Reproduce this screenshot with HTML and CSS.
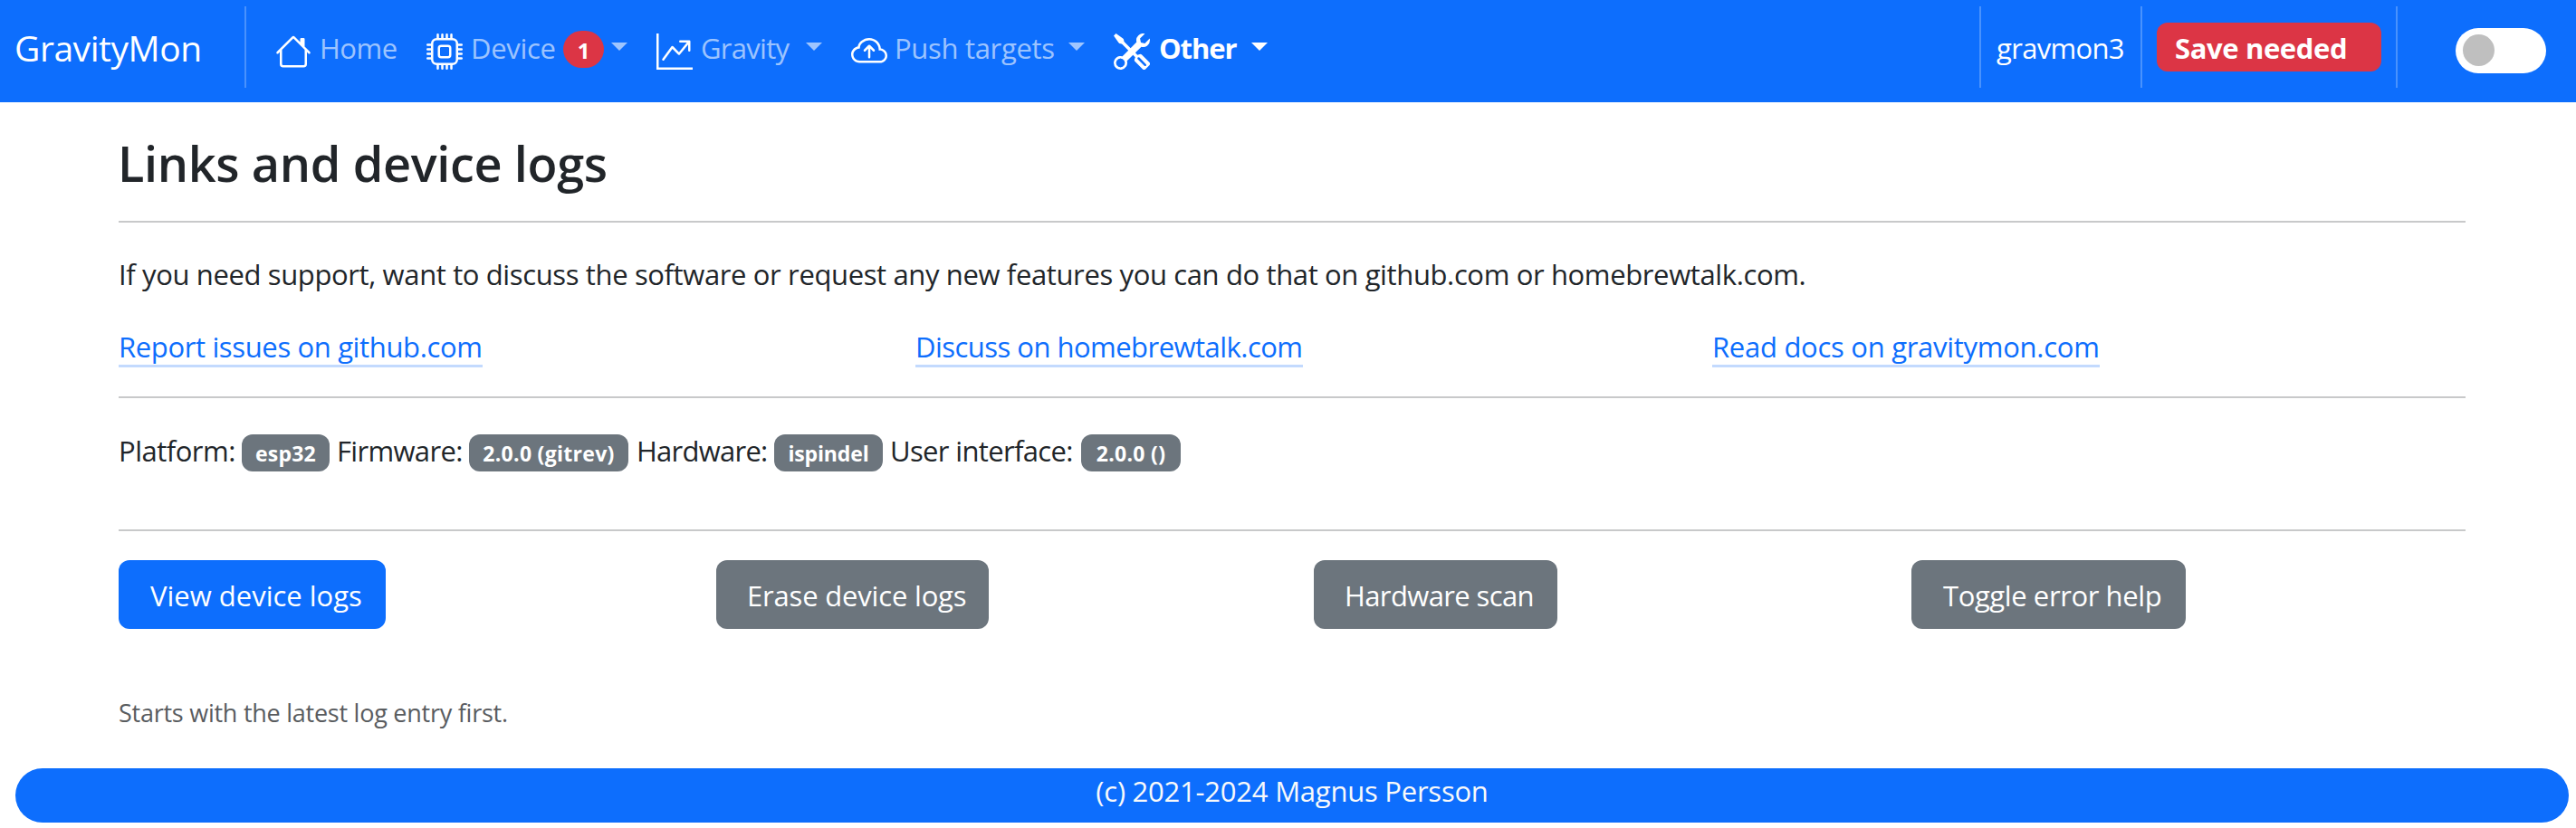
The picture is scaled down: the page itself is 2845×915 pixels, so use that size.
FILE: index.html
```html
<!DOCTYPE html>
<html lang="en">
<head>
<meta charset="utf-8">
<title>GravityMon</title>
<link rel="stylesheet" href="styles.css">
</head>
<body>
<nav class="navbar">
  <a class="brand">GravityMon</a>
  <div class="divider"></div>
  <ul class="menu">
    <li class="item home">
      <svg class="icon" viewBox="0 0 16 16"><path d="M8.707 1.5a1 1 0 0 0-1.414 0L.646 8.146a.5.5 0 0 0 .708.708L2 8.207V13.5A1.5 1.5 0 0 0 3.5 15h9a1.5 1.5 0 0 0 1.5-1.5V8.207l.646.647a.5.5 0 0 0 .708-.708L13 5.793V2.5a.5.5 0 0 0-.5-.5h-1a.5.5 0 0 0-.5.5v1.293L8.707 1.5ZM13 7.207V13.5a.5.5 0 0 1-.5.5h-9a.5.5 0 0 1-.5-.5V7.207l5-5 5 5Z"/></svg>
      <span class="label">Home</span>
    </li>
    <li class="item device">
      <svg class="icon" viewBox="0 0 16 16"><path d="M5 0a.5.5 0 0 1 .5.5V2h1V.5a.5.5 0 0 1 1 0V2h1V.5a.5.5 0 0 1 1 0V2h1V.5a.5.5 0 0 1 1 0V2A2.5 2.5 0 0 1 14 4.5h1.5a.5.5 0 0 1 0 1H14v1h1.5a.5.5 0 0 1 0 1H14v1h1.5a.5.5 0 0 1 0 1H14v1h1.5a.5.5 0 0 1 0 1H14a2.5 2.5 0 0 1-2.5 2.5v1.5a.5.5 0 0 1-1 0V14h-1v1.5a.5.5 0 0 1-1 0V14h-1v1.5a.5.5 0 0 1-1 0V14h-1v1.5a.5.5 0 0 1-1 0V14A2.5 2.5 0 0 1 2 11.5H.5a.5.5 0 0 1 0-1H2v-1H.5a.5.5 0 0 1 0-1H2v-1H.5a.5.5 0 0 1 0-1H2v-1H.5a.5.5 0 0 1 0-1H2A2.5 2.5 0 0 1 4.5 2V.5A.5.5 0 0 1 5 0zm-.5 3A1.5 1.5 0 0 0 3 4.5v7A1.5 1.5 0 0 0 4.5 13h7a1.5 1.5 0 0 0 1.5-1.5v-7A1.5 1.5 0 0 0 11.5 3h-7zM5 6.5A1.5 1.5 0 0 1 6.5 5h3A1.5 1.5 0 0 1 11 6.5v3A1.5 1.5 0 0 1 9.5 11h-3A1.5 1.5 0 0 1 5 9.5v-3zM6.5 6a.5.5 0 0 0-.5.5v3a.5.5 0 0 0 .5.5h3a.5.5 0 0 0 .5-.5v-3a.5.5 0 0 0-.5-.5h-3z"/></svg>
      <span class="label">Device</span>
      <span class="count">1</span>
      <span class="caret"></span>
    </li>
    <li class="item gravity">
      <svg class="icon" viewBox="0 0 16 16"><path fill-rule="evenodd" d="M0 0h1v15h15v1H0V0Zm10 3.5a.5.5 0 0 1 .5-.5h4a.5.5 0 0 1 .5.5v4a.5.5 0 0 1-1 0V4.9l-3.613 4.417a.5.5 0 0 1-.74.037L7.06 6.767l-3.656 5.027a.5.5 0 0 1-.808-.588l4-5.5a.5.5 0 0 1 .758-.06l2.609 2.61L13.445 4H10.5a.5.5 0 0 1-.5-.5Z"/></svg>
      <span class="label">Gravity</span>
      <span class="caret"></span>
    </li>
    <li class="item push">
      <svg class="icon" viewBox="0 0 16 16"><path fill-rule="evenodd" d="M7.646 5.146a.5.5 0 0 1 .708 0l2 2a.5.5 0 0 1-.708.708L8.5 6.707V10.5a.5.5 0 0 1-1 0V6.707L6.354 7.854a.5.5 0 1 1-.708-.708l2-2z"/><path d="M4.406 3.342A5.53 5.53 0 0 1 8 2c2.69 0 4.923 2 5.166 4.579C14.758 6.804 16 8.137 16 9.773 16 11.569 14.502 13 12.687 13H3.781C1.708 13 0 11.366 0 9.318c0-1.763 1.266-3.223 2.942-3.593.143-.863.698-1.723 1.464-2.383zm.653.757c-.757.653-1.153 1.44-1.153 2.056v.448l-.445.049C2.064 6.805 1 7.952 1 9.318 1 10.785 2.23 12 3.781 12h8.906C13.98 12 15 10.988 15 9.773c0-1.216-1.02-2.228-2.313-2.228h-.5v-.5C12.188 4.825 10.328 3 8 3a4.53 4.53 0 0 0-2.941 1.1z"/></svg>
      <span class="label">Push targets</span>
      <span class="caret"></span>
    </li>
    <li class="item other">
      <svg class="icon" viewBox="0 0 16 16"><path d="M1 0 0 1l2.2 3.081a1 1 0 0 0 .815.419h.07a1 1 0 0 1 .708.293l2.675 2.675-2.617 2.654A3.003 3.003 0 0 0 0 13a3 3 0 1 0 5.878-.851l2.654-2.617.968.968-.305.914a1 1 0 0 0 .242 1.023l3.27 3.27a.997.997 0 0 0 1.414 0l1.586-1.586a.997.997 0 0 0 0-1.414l-3.27-3.27a1 1 0 0 0-1.023-.242L10.5 9.5l-.96-.96 2.68-2.643A3.005 3.005 0 0 0 16 3c0-.269-.035-.53-.102-.777l-2.14 2.141L12 4l-.364-1.757L13.777.102a3 3 0 0 0-3.675 3.68L7.462 6.46 4.793 3.793a1 1 0 0 1-.293-.707v-.071a1 1 0 0 0-.419-.814L1 0Zm9.646 10.646a.5.5 0 0 1 .708 0l2.914 2.915a.5.5 0 0 1-.707.707l-2.915-2.914a.5.5 0 0 1 0-.708ZM3 11l.471.242.529.026.287.445.445.287.026.529L5 13l-.242.471-.026.529-.445.287-.287.445-.529.026L3 15l-.471-.242L2 14.732l-.287-.445L1.268 14l-.026-.529L1 13l.242-.471.026-.529.445-.287.287-.445.529-.026L3 11Z"/></svg>
      <span class="label">Other</span>
      <span class="caret"></span>
    </li>
  </ul>
  <div class="tools">
    <div class="divider"></div>
    <span class="host">gravmon3</span>
    <div class="divider"></div>
    <span class="save">Save needed</span>
    <div class="divider"></div>
    <span class="switch"><span class="knob"></span></span>
  </div>
</nav>
<main class="content">
  <h3 class="title">Links and device logs</h3>
  <hr class="rule rule-title">
  <p class="intro">If you need support, want to discuss the software or request any new features you can do that on github.com or homebrewtalk.com.</p>
  <div class="links">
    <div><a class="link report">Report issues on github.com</a></div>
    <div><a class="link discuss">Discuss on homebrewtalk.com</a></div>
    <div><a class="link docs">Read docs on gravitymon.com</a></div>
  </div>
  <hr class="rule rule-links">
  <div class="versions">
    <span class="key platform">Platform:</span><span class="badge b-platform">esp32</span>
    <span class="key firmware">Firmware:</span><span class="badge b-firmware">2.0.0 (gitrev)</span>
    <span class="key hardware">Hardware:</span><span class="badge b-hardware">ispindel</span>
    <span class="key ui">User interface:</span><span class="badge b-ui">2.0.0 ()</span>
  </div>
  <hr class="rule rule-versions">
  <div class="actions">
    <div><button class="btn primary view">View device logs</button></div>
    <div><button class="btn erase">Erase device logs</button></div>
    <div><button class="btn scan">Hardware scan</button></div>
    <div><button class="btn toggle">Toggle error help</button></div>
  </div>
  <p class="hint">Starts with the latest log entry first.</p>
</main>
<footer class="footer">(c) 2021-2024 Magnus Persson</footer>
</body>
</html>
```
FILE: styles.css
```css
* { box-sizing: border-box; }
body {
  margin: 0;
  background: #fff;
  color: #212529;
  font: 400 31px/48px "Open Sans", "Noto Sans", sans-serif;
}
.navbar {
  display: flex;
  align-items: flex-start;
  height: 113px;
  padding: 7px 33px 0 16px;
  background: #0d6efd;
  color: #fff;
  white-space: nowrap;
}
.brand {
  width: 254px;
  margin-top: 16px;
  font-size: 39px;
  line-height: 60px;
  letter-spacing: -.45px;
}
.divider {
  flex: none;
  width: 2px;
  height: 90px;
  background: rgba(255, 255, 255, .25);
}
.menu {
  display: flex;
  gap: 32px;
  margin: 22px 0 0 32px;
  padding: 0;
  list-style: none;
  color: rgba(255, 255, 255, .6);
}
.item { display: flex; align-items: flex-start; }
.icon {
  flex: none;
  width: 40px;
  height: 40px;
  margin: 8px 9px 0 0;
  fill: #fff;
}
.caret {
  margin: 18px 0 0 auto;
  border: 9px solid transparent;
  border-top-color: currentColor;
  border-bottom: 0;
}
.home { width: 135px; letter-spacing: -.5px; }
.device { width: 222px; letter-spacing: -.3px; }
.gravity { width: 183px; letter-spacing: -.72px; }
.push { width: 258px; letter-spacing: -.31px; }
.push .icon { margin-right: 8px; }
.other { width: 170px; letter-spacing: -1.1px; font-weight: 700; color: #fff; }
.other .icon { margin-right: 10px; }
.count {
  width: 45px;
  height: 41px;
  margin: 5px 0 0 auto;
  border-radius: 21px;
  background: #dc3545;
  color: #fff;
  font-size: 24px;
  font-weight: 700;
  line-height: 43px;
  text-align: center;
}
.count + .caret { margin-left: 8px; }
.tools { display: flex; margin-left: auto; }
.host {
  width: 176px;
  padding-left: 17px;
  margin-top: 22px;
  letter-spacing: -.68px;
}
.save {
  width: 248px;
  height: 54px;
  margin: 18px 16px 0;
  padding: 4px 0 0 20px;
  border-radius: 12px;
  background: #dc3545;
  font-weight: 700;
  letter-spacing: -.38px;
}
.switch {
  width: 100px;
  height: 50px;
  margin: 24px 0 0 64px;
  padding: 7px 8px;
  border-radius: 25px;
  background: #fff;
}
.knob {
  display: block;
  width: 35px;
  height: 35px;
  border-radius: 50%;
  background: #bfbfbf;
}
.content { padding: 34px 0 0 131px; }
.title {
  margin: 0 0 0 -1px;
  font-size: 54px;
  font-weight: 600;
  line-height: 66px;
  letter-spacing: -.35px;
}
.rule {
  width: 2592px;
  height: 2px;
  margin: 0;
  border: 0;
  background: #c8c9ca;
}
.rule-title { margin: 31px 0 33px; }
.intro { margin: 0 0 32px; letter-spacing: -.37px; }
.links { display: grid; grid-template-columns: repeat(3, 880px); height: 47px; }
.link {
  display: block;
  width: fit-content;
  height: 47px;
  border-bottom: 3px solid #c3dafe;
  color: #0d6efd;
}
.report { letter-spacing: -.36px; }
.discuss { letter-spacing: -.53px; }
.docs { letter-spacing: -.28px; }
.rule-links { margin: 32px 0 34px; }
.versions { display: flex; white-space: nowrap; }
.platform { width: 136px; letter-spacing: -.5px; }
.firmware { width: 147px; padding-left: 1px; letter-spacing: -.67px; }
.hardware { width: 153px; padding-left: 1px; letter-spacing: -.75px; }
.ui { width: 211px; letter-spacing: -.65px; }
.badge {
  height: 41px;
  margin: 6px 8px 0 0;
  border-radius: 12px;
  background: #6c757d;
  color: #fff;
  font-size: 23px;
  font-weight: 700;
  line-height: 42px;
  text-align: center;
}
.b-platform { width: 97px; margin-right: 7px; letter-spacing: .2px; }
.b-firmware { width: 176px; letter-spacing: .3px; }
.b-hardware { width: 120px; letter-spacing: -.15px; }
.b-ui { width: 110px; letter-spacing: .3px; }
.rule-versions { margin: 63px 0 32px; }
.actions { display: grid; grid-template-columns: repeat(4, 660px); height: 76px; }
.btn {
  display: block;
  height: 76px;
  padding: 1px 0 0 35px;
  border: 0;
  border-radius: 12px;
  background: #6c757d;
  color: #fff;
  font: inherit;
  text-align: left;
  white-space: nowrap;
}
.primary { background: #0d6efd; }
.view { width: 295px; }
.erase { width: 301px; padding-left: 34px; letter-spacing: -.18px; }
.scan { width: 269px; padding-left: 34px; letter-spacing: -.62px; }
.toggle { width: 303px; letter-spacing: -.4px; }
.hint {
  margin: 72px 0 40px;
  color: #595c5f;
  font-size: 27px;
  line-height: 42px;
  letter-spacing: -.25px;
}
.footer {
  height: 60px;
  margin: 0 8px 0 17px;
  padding-top: 1px;
  border-radius: 30px;
  background: #0d6efd;
  color: #f8f9fa;
  text-align: center;
  letter-spacing: -.23px;
}
```
